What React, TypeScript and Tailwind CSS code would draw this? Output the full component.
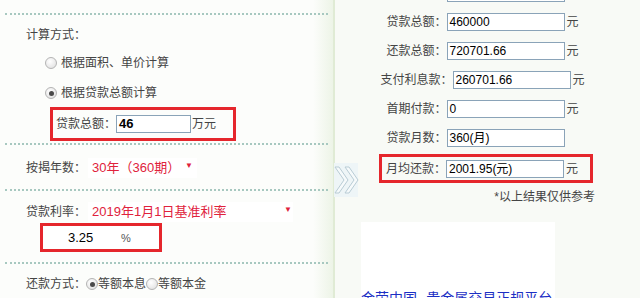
import React from "react";

function Radio({ checked }: { checked?: boolean }) {
  return (
    <span className="w-[12px] h-[12px] shrink-0 rounded-full border border-[#b4b4b4] bg-[radial-gradient(circle_at_40%_35%,#ffffff,#dcdcdc)] flex items-center justify-center">
      {checked && <span className="w-[5px] h-[5px] rounded-full bg-[#4a4a4a]" />}
    </span>
  );
}

function Caret({ left }: { left: string }) {
  return <span className={`absolute top-[4px] text-[8px] leading-none text-[#e0223c] ${left}`}>▼</span>;
}

function ResultRow({ label, value, unit = "元" }: { label: string; value: string; unit?: string }) {
  return (
    <div className="flex items-center justify-center h-[18px] mb-[11px]">
      <span className="text-[#444] shrink-0">{label}：</span>
      <span className="w-[118px] h-[18px] shrink-0 border border-[#8aa3b8] bg-white pl-[2px] leading-[16px] text-black">{value}</span>
      <span className="w-[14px] shrink-0 pl-[2px] text-[#444]">{unit}</span>
    </div>
  );
}

export default function App() {
  const font = "font-['Liberation_Sans','Noto_Sans_CJK_SC',sans-serif]";
  return (
    <div className={`w-[640px] h-[298px] overflow-hidden flex whitespace-nowrap text-[12px] leading-[20px] text-[#444] ${font}`}>
      {/* left: form */}
      <div className="w-[333px] shrink-0 pt-[13px] pl-[5px] bg-[linear-gradient(to_right,#fcfdfb_94%,#edf4e7)]">
        <div className="border-t-2 border-dotted border-[#a7c8c0] w-[323px] pb-[2px]">
          <div className="mt-[10px] pl-[21px]">计算方式：</div>
          <div className="mt-[8px] pl-[40px] flex items-center gap-[4px]">
            <Radio />
            <span>根据面积、单价计算</span>
          </div>
          <div className="mt-[10px] pl-[40px] flex items-center gap-[4px]">
            <Radio checked />
            <span>根据贷款总额计算</span>
          </div>
          <div className="mt-[4px] ml-[45px] w-[186px] h-[34px] border-[3px] border-[#e5262c] flex items-center pl-[3px]">
            <span className="w-[60px] shrink-0">贷款总额：</span>
            <span className="w-[75px] h-[18px] shrink-0 border border-[#8aa3b8] bg-white pl-[2px] leading-[16px] text-[13px] font-bold text-black">46</span>
            <span className="pl-[1px]">万元</span>
          </div>
        </div>

        <div className="border-t-2 border-dotted border-[#a7c8c0] w-[323px] pb-[11px]">
          <div className="mt-[13px] pl-[21px] flex items-center">
            <span className="w-[62px] shrink-0">按揭年数：</span>
            <span className="relative w-[109px] h-[20px] shrink-0 bg-white text-[13px] text-[#e0223c] pl-[4px]">
              30年（360期）
              <Caret left="left-[97px]" />
            </span>
          </div>
        </div>

        <div className="border-t-2 border-dotted border-[#a7c8c0] w-[323px] pb-[10px]">
          <div className="mt-[11px] pl-[21px] flex items-center">
            <span className="w-[62px] shrink-0">贷款利率：</span>
            <span className="relative w-[205px] h-[20px] shrink-0 bg-white text-[13px] text-[#e0223c] pl-[4px]">
              2019年1月1日基准利率
              <Caret left="left-[196px]" />
            </span>
          </div>
          <div className="mt-[1px] ml-[35px] w-[122px] h-[29px] border-[3px] border-[#e5262c] bg-white flex items-center pl-[25px]">
            <span className="text-[13px] text-black w-[28px] shrink-0">3.25</span>
            <span className="ml-[25px] text-[11px] text-[#555]">%</span>
          </div>
        </div>

        <div className="border-t-2 border-dotted border-[#a7c8c0] w-[323px]">
          <div className="mt-[10px] pl-[21px] flex items-center">
            <span className="w-[60px] shrink-0">还款方式：</span>
            <Radio checked />
            <span>等额本息</span>
            <Radio />
            <span>等额本金</span>
          </div>
        </div>
      </div>

      {/* divider */}
      <div className="relative w-[2px] shrink-0 bg-[#e0ebd5]">
        <div className="absolute left-[1px] top-[163px] w-[24px] h-[34px] bg-[#eef5f7]">
          <svg width="26" height="34" viewBox="0 0 26 34" className="absolute left-0 top-0">
            <polygon points="1,4 5,4 14,17 5,30 1,30 10,17" fill="#f6fafb" stroke="#b9ccd5" strokeWidth="1" />
            <polygon points="11,4 15,4 24,17 15,30 11,30 20,17" fill="#f6fafb" stroke="#b9ccd5" strokeWidth="1" />
          </svg>
        </div>
      </div>

      {/* right: results */}
      <div className="flex-1 bg-[#f8faf6] pr-[10px]">
        {/* previous row, scrolled off the top: only its input's bottom edge shows */}
        <div className="mt-[-16px] mb-[11px] flex justify-center h-[18px]">
          <span className="w-[60px] shrink-0" />
          <span className="w-[118px] h-[18px] shrink-0 border border-[#8aa3b8] bg-white" />
          <span className="w-[14px] shrink-0" />
        </div>
        <ResultRow label="贷款总额" value="460000" />
        <ResultRow label="还款总额" value="720701.66" />
        <ResultRow label="支付利息款" value="260701.66" />
        <ResultRow label="首期付款" value="0" />
        <ResultRow label="贷款月数" value="360(月)" unit="" />
        <div className="mt-[-4px] flex justify-center pl-[6px]">
          <div className="w-[214px] h-[29px] border-[3px] border-[#e5262c] flex items-center justify-center pr-[7px]">
            <span className="shrink-0">月均还款：</span>
            <span className="w-[118px] h-[18px] shrink-0 border border-[#8aa3b8] bg-white pl-[2px] leading-[16px] text-black">2001.95(元)</span>
            <span className="pl-[2px]">元</span>
          </div>
        </div>
        <div className="mt-[6px] leading-[16px] text-right pr-[35px]">*以上结果仅供参考</div>
        <div className="mt-[17px] ml-[26px] w-[194px] h-[90px] bg-white pt-[67px]">
          <a className="block text-[14px] leading-[18px] text-[#1c2fc4]">金荣中国--贵金属交易正规平台</a>
        </div>
      </div>
    </div>
  );
}
